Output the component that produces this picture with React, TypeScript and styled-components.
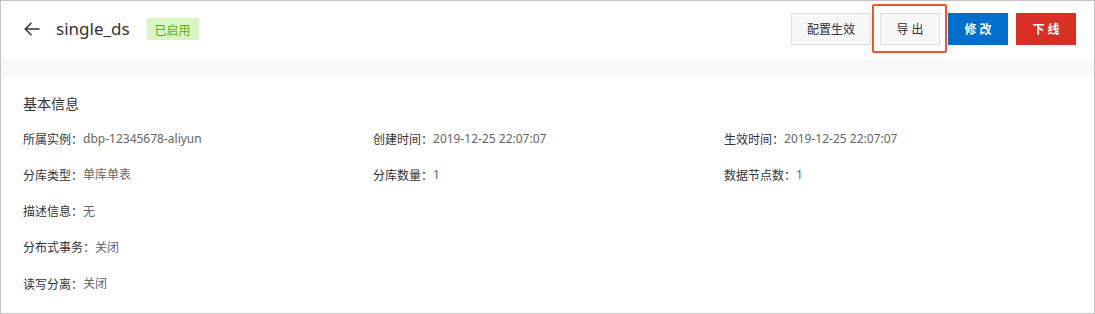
import React from 'react';
import styled, { createGlobalStyle } from 'styled-components';

const GlobalStyle = createGlobalStyle`
  html, body {
    margin: 0;
    padding: 0;
    background: #ffffff;
  }
  body {
    font-family: "Noto Sans", "Noto Sans CJK SC", sans-serif;
  }
`;

const fields = [
  { label: '所属实例', value: 'dbp-12345678-aliyun' },
  { label: '创建时间', value: '2019-12-25 22:07:07' },
  { label: '生效时间', value: '2019-12-25 22:07:07' },
  { label: '分库类型', value: '单库单表' },
  { label: '分库数量', value: '1' },
  { label: '数据节点数', value: '1' },
  { label: '描述信息', value: '无', full: true },
  { label: '分布式事务', value: '关闭', full: true },
  { label: '读写分离', value: '关闭', full: true },
];

const BackArrow = () => (
  <svg width="16" height="14" viewBox="0 0 16 14" fill="none">
    <path
      d="M15 7H1.5M7 1.2L1.2 7L7 12.8"
      stroke="#333"
      strokeWidth="1.5"
      strokeLinecap="round"
      strokeLinejoin="round"
    />
  </svg>
);

export default function App() {
  return (
    <Page>
      <GlobalStyle />
      <Header>
        <TitleGroup>
          <BackButton>
            <BackArrow />
          </BackButton>
          <Title>single_ds</Title>
          <StatusTag>已启用</StatusTag>
        </TitleGroup>
        <Actions>
          <Button>配置生效</Button>
          <Highlight>
            <Button spaced>导出</Button>
          </Highlight>
          <Button variant="primary" spaced>
            修改
          </Button>
          <Button variant="danger" spaced>
            下线
          </Button>
        </Actions>
      </Header>
      <Divider />
      <Content>
        <SectionTitle>基本信息</SectionTitle>
        <InfoGrid>
          {fields.map((f) => (
            <InfoItem key={f.label} full={f.full}>
              <Label>{f.label}：</Label>
              <Value>{f.value}</Value>
            </InfoItem>
          ))}
        </InfoGrid>
      </Content>
    </Page>
  );
}

const Page = styled.div`
  width: 1095px;
  height: 314px;
  box-sizing: border-box;
  border: 1px solid #c4c4c4;
  background: #ffffff;
  display: flex;
  flex-direction: column;
`;

const Header = styled.div`
  height: 59px;
  display: flex;
  align-items: center;
  justify-content: space-between;
  padding: 0 18px 0 23px;
  box-sizing: border-box;
`;

const TitleGroup = styled.div`
  display: flex;
  align-items: center;
  margin-top: -3px;
`;

const BackButton = styled.span`
  display: inline-flex;
  width: 16px;
  height: 14px;
  margin-right: 16px;
  cursor: pointer;
`;

const Title = styled.span`
  font-size: 17px;
  color: #333333;
  line-height: 24px;
  margin-right: 17px;
`;

const StatusTag = styled.span`
  display: inline-flex;
  align-items: center;
  justify-content: center;
  height: 22px;
  width: 52px;
  background: #daf5c4;
  color: #53b118;
  font-size: 12px;
  font-family: "Noto Sans CJK SC", sans-serif;
`;

const Actions = styled.div`
  display: flex;
  align-items: center;
  gap: 8px;
  margin-top: -4px;
`;

const Highlight = styled.div`
  position: relative;
  display: flex;
  margin-left: 1px;

  &::after {
    content: '';
    position: absolute;
    left: -8px;
    right: -7px;
    top: -9px;
    bottom: -8px;
    border: 2px solid #f0532e;
    border-radius: 2px;
    pointer-events: none;
  }
`;

const Button = styled.button<{ variant?: 'primary' | 'danger'; spaced?: boolean }>`
  height: 32px;
  min-width: 60px;
  padding: ${(p) => (p.spaced ? '0' : '0 15px')};
  box-sizing: border-box;
  font-size: 12px;
  font-family: "Noto Sans CJK SC", sans-serif;
  letter-spacing: ${(p) => (p.spaced ? '3px' : '0')};
  text-indent: ${(p) => (p.spaced ? '3px' : '0')};
  cursor: pointer;
  border: 1px solid
    ${(p) =>
      p.variant === 'primary' ? '#0070cc' : p.variant === 'danger' ? '#d93026' : '#dedede'};
  background: ${(p) =>
    p.variant === 'primary' ? '#0070cc' : p.variant === 'danger' ? '#d93026' : '#f7f7f7'};
  color: ${(p) => (p.variant ? '#ffffff' : '#333333')};
  font-weight: ${(p) => (p.variant ? 600 : 400)};
`;

const Divider = styled.div`
  height: 16px;
  background: #f8f8f8;
`;

const Content = styled.div`
  padding: 17px 22px 0;
`;

const SectionTitle = styled.div`
  font-size: 14px;
  line-height: 20px;
  color: #333333;
  font-family: "Noto Sans CJK SC", sans-serif;
  margin-bottom: 15px;
`;

const InfoGrid = styled.div`
  display: grid;
  grid-template-columns: 350px 351px 1fr;
  row-gap: 16.3px;
`;

const InfoItem = styled.div<{ full?: boolean }>`
  grid-column: ${(p) => (p.full ? '1 / -1' : 'auto')};
  display: flex;
  align-items: center;
  height: 20px;
  font-size: 12px;
`;

const Label = styled.span`
  color: #333333;
  font-family: "Noto Sans CJK SC", sans-serif;
`;

const Value = styled.span`
  color: #666666;
`;
